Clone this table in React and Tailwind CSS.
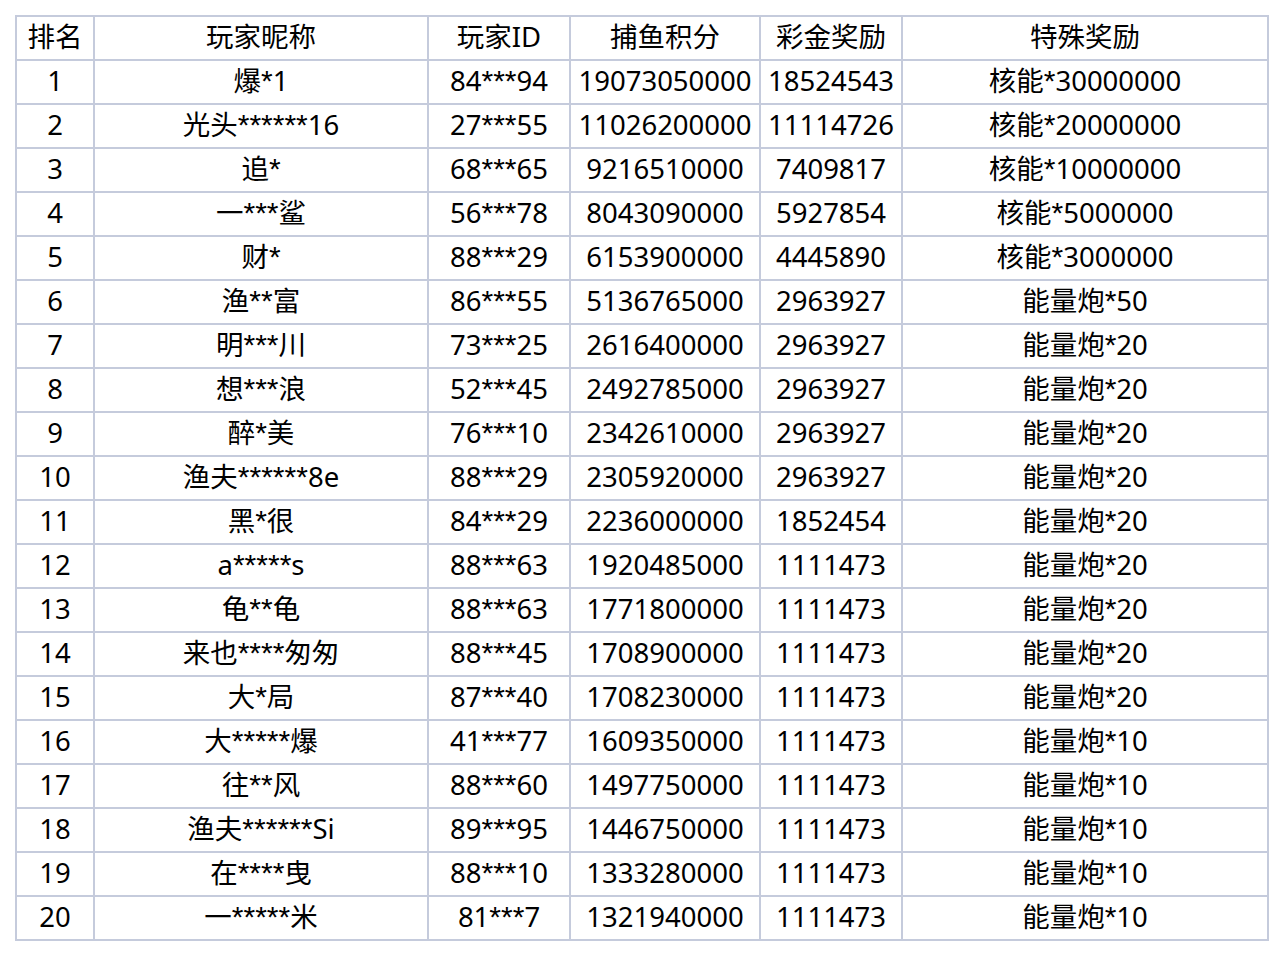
const header = ['排名', '玩家昵称', '玩家ID', '捕鱼积分', '彩金奖励', '特殊奖励'];

const rows = [
  ['1', '爆*1', '84***94', '19073050000', '18524543', '核能*30000000'],
  ['2', '光头******16', '27***55', '11026200000', '11114726', '核能*20000000'],
  ['3', '追*', '68***65', '9216510000', '7409817', '核能*10000000'],
  ['4', '一***鲨', '56***78', '8043090000', '5927854', '核能*5000000'],
  ['5', '财*', '88***29', '6153900000', '4445890', '核能*3000000'],
  ['6', '渔**富', '86***55', '5136765000', '2963927', '能量炮*50'],
  ['7', '明***川', '73***25', '2616400000', '2963927', '能量炮*20'],
  ['8', '想***浪', '52***45', '2492785000', '2963927', '能量炮*20'],
  ['9', '醉*美', '76***10', '2342610000', '2963927', '能量炮*20'],
  ['10', '渔夫******8e', '88***29', '2305920000', '2963927', '能量炮*20'],
  ['11', '黑*很', '84***29', '2236000000', '1852454', '能量炮*20'],
  ['12', 'a*****s', '88***63', '1920485000', '1111473', '能量炮*20'],
  ['13', '龟**龟', '88***63', '1771800000', '1111473', '能量炮*20'],
  ['14', '来也****匆匆', '88***45', '1708900000', '1111473', '能量炮*20'],
  ['15', '大*局', '87***40', '1708230000', '1111473', '能量炮*20'],
  ['16', '大*****爆', '41***77', '1609350000', '1111473', '能量炮*10'],
  ['17', '往**风', '88***60', '1497750000', '1111473', '能量炮*10'],
  ['18', '渔夫******Si', '89***95', '1446750000', '1111473', '能量炮*10'],
  ['19', '在****曳', '88***10', '1333280000', '1111473', '能量炮*10'],
  ['20', '一*****米', '81***7', '1321940000', '1111473', '能量炮*10'],
];

// asterisks in the source are narrower than Noto's, so set them in Liberation Sans
const Text = ({ value }) => {
  const parts = value.split(/(\*+)/);
  return parts.map((p, i) =>
    p.startsWith('*') ? (
      <span
        key={i}
        className="text-[30px]"
        style={{ fontFamily: '"Liberation Sans", sans-serif' }}
      >
        {p}
      </span>
    ) : (
      <span key={i}>{p}</span>
    )
  );
};

const Cell = ({ children }) => (
  <div className="bg-white h-[42px] pb-[2px] flex items-center justify-center whitespace-nowrap overflow-hidden">
    <div>
      <Text value={children} />
    </div>
  </div>
);

export default function App() {
  return (
    <div
      className="min-h-screen bg-white pt-[15px] pl-[15px] text-black text-[27.5px] leading-none"
      style={{ fontFamily: '"Noto Sans", "Noto Sans CJK SC", sans-serif' }}
    >
      <div className="inline-grid grid-cols-[76px_332px_140px_188px_140px_364px] gap-[2px] p-[2px] bg-[#c5cbdc]">
        {header.map((h) => (
          <Cell key={h}>{h}</Cell>
        ))}
        {rows.map((r) =>
          r.map((v, i) => <Cell key={r[0] + '-' + i}>{v}</Cell>)
        )}
      </div>
    </div>
  );
}
